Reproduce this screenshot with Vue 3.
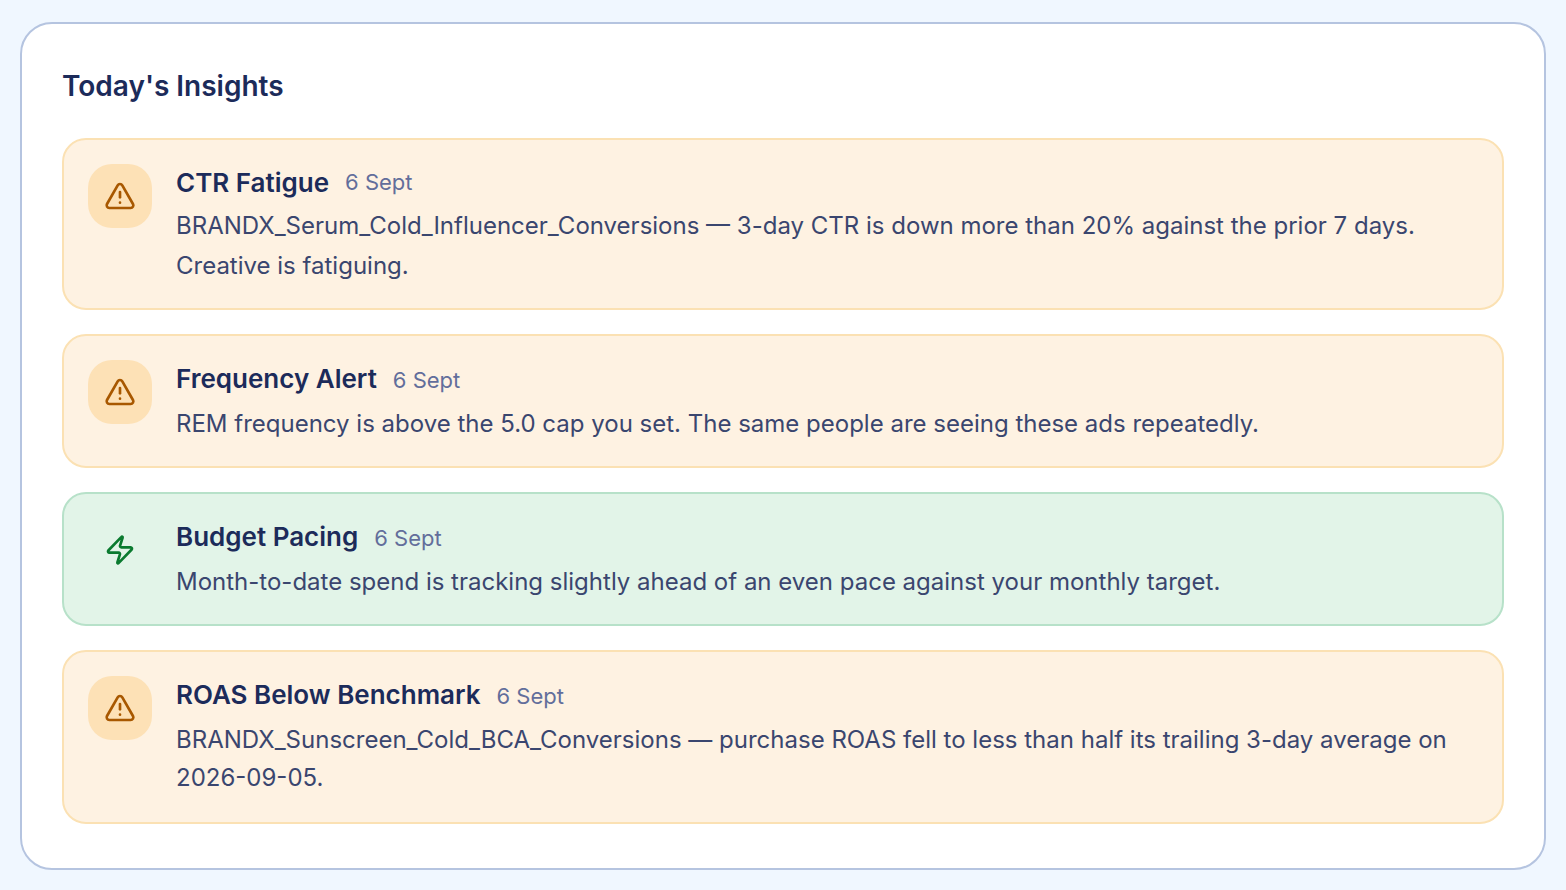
<template>
  <div class="page">
    <section class="panel">
      <h2 class="panel_title">Today's Insights</h2>
      <ul class="insight_list">
        <li v-for="item in insights" :key="item.title" class="insight" :class="item.type">
          <div class="insight_icon">
            <svg v-if="item.type === 'warning'" viewBox="0 0 24 24">
              <path d="m21.73 18-8-14a2 2 0 0 0-3.48 0l-8 14A2 2 0 0 0 4 21h16a2 2 0 0 0 1.73-3" />
              <path d="M12 9v4" />
              <path d="M12 17h.01" />
            </svg>
            <svg v-else viewBox="0 0 24 24">
              <path
                d="M4 14a1 1 0 0 1-.78-1.63l9.9-10.2a.5.5 0 0 1 .86.46l-1.92 6.02A1 1 0 0 0 13 10h7a1 1 0 0 1 .78 1.63l-9.9 10.2a.5.5 0 0 1-.86-.46l1.92-6.02A1 1 0 0 0 11 14z"
              />
            </svg>
          </div>
          <div class="insight_body">
            <div class="insight_head">
              <h3>{{ item.title }}</h3>
              <span>{{ item.date }}</span>
            </div>
            <p>{{ item.text }}</p>
          </div>
        </li>
      </ul>
    </section>
  </div>
</template>

<script setup>
const insights = [
  {
    type: 'warning',
    title: 'CTR Fatigue',
    date: '6 Sept',
    text: 'BRANDX_Serum_Cold_Influencer_Conversions — 3-day CTR is down more than 20% against the prior 7 days. Creative is fatiguing.'
  },
  {
    type: 'warning',
    title: 'Frequency Alert',
    date: '6 Sept',
    text: 'REM frequency is above the 5.0 cap you set. The same people are seeing these ads repeatedly.'
  },
  {
    type: 'success',
    title: 'Budget Pacing',
    date: '6 Sept',
    text: 'Month-to-date spend is tracking slightly ahead of an even pace against your monthly target.'
  },
  {
    type: 'warning',
    title: 'ROAS Below Benchmark',
    date: '6 Sept',
    text: 'BRANDX_Sunscreen_Cold_BCA_Conversions — purchase ROAS fell to less than half its trailing 3-day average on 2026-09-05.'
  }
]
</script>

<style>
body {
  background-color: #f0f7ff;
}
</style>

<style scoped>
.page {
  box-sizing: border-box;
  height: 890px;
  padding: 22px 20px 20px;
  font-family: Inter, 'Liberation Sans', sans-serif;
}
.panel {
  box-sizing: border-box;
  height: 848px;
  padding: 40px;
  border: 2px solid #b5c4e0;
  border-radius: 32px;
  background-color: #ffffff;
}
.panel_title {
  margin: 0 0 30px;
  font-size: 28px;
  font-weight: 600;
  line-height: 44px;
  color: #1c2b5a;
}
.insight_list {
  display: flex;
  flex-direction: column;
  gap: 24px;
  margin: 0;
  padding: 0;
  list-style: none;
}
.insight {
  display: flex;
  box-sizing: border-box;
  gap: 24px;
  height: 134px;
  padding: 24px;
  border: 2px solid #fbe1b3;
  border-radius: 24px;
}
.insight:first-child {
  height: 172px;
}
.insight:last-child {
  height: 174px;
}
.insight.warning {
  background-color: #fef2e2;
}
.insight.success {
  border-color: #b7e1c9;
  background-color: #e2f4e8;
}
.insight_icon {
  display: flex;
  flex-shrink: 0;
  align-items: center;
  justify-content: center;
  width: 64px;
  height: 64px;
  border-radius: 24px;
  color: #a85800;
}
.warning .insight_icon {
  background-color: #fde1b6;
}
.success .insight_icon {
  color: #0a7a2f;
}
.insight_icon svg {
  width: 32px;
  height: 32px;
  fill: none;
  stroke: currentColor;
  stroke-width: 2;
  stroke-linecap: round;
  stroke-linejoin: round;
}
.insight_head {
  display: flex;
  align-items: baseline;
  gap: 16px;
  height: 37px;
  margin-bottom: 7px;
}
.insight:first-child .insight_head {
  margin-bottom: 5px;
}
.insight:last-child .insight_head {
  margin-bottom: 8px;
}
.insight_head h3 {
  margin: 0;
  font-size: 26px;
  font-weight: 600;
  line-height: 37px;
  color: #1c2b5a;
}
.insight_head span {
  font-size: 22px;
  line-height: 33px;
  color: #626e9b;
}
.insight:first-child .insight_head span {
  align-self: center;
}
.insight_body p {
  margin: 0;
  font-size: 24px;
  line-height: 39px;
  color: #3a466f;
}
.insight:first-child p {
  line-height: 40px;
}
.insight:last-child p {
  line-height: 38px;
}
</style>
